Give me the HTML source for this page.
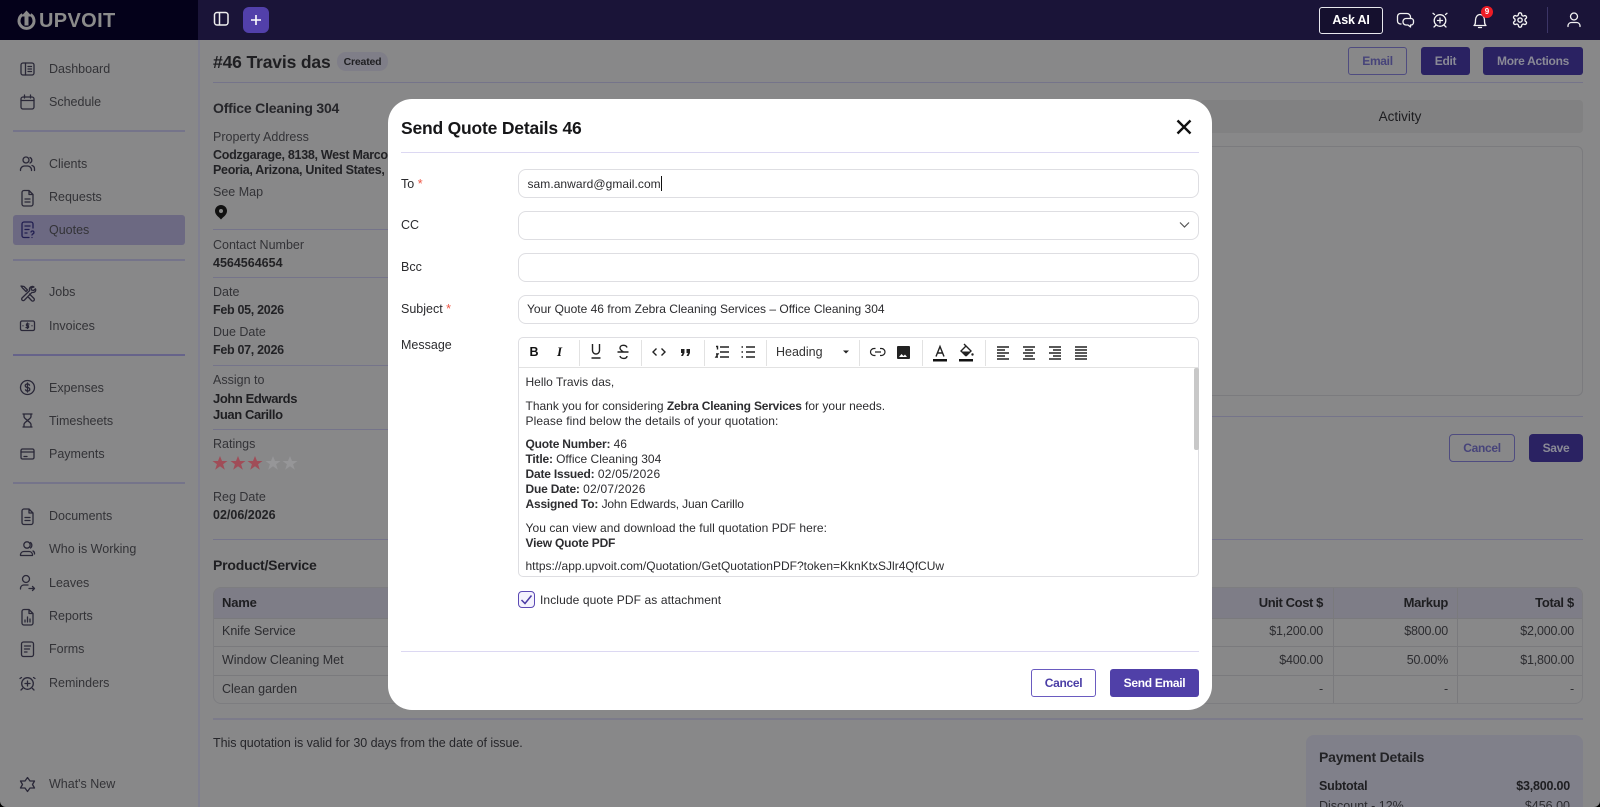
<!DOCTYPE html>
<html lang="en"><head><meta charset="utf-8"><title>Send Quote</title>
<style>
*{box-sizing:border-box}
html,body{margin:0;padding:0;width:1600px;height:807px;overflow:hidden;background:#000}
body{position:relative;font-family:"Liberation Sans",sans-serif;font-size:13px;color:#2c2c30}
#page{position:absolute;left:0;top:0;width:1600px;height:807px;background:#888889;overflow:hidden;border-radius:0 0 6px 6px}
.t{position:absolute;white-space:nowrap;line-height:16px}
.b{font-weight:bold;letter-spacing:-.2px}
.l{position:absolute;height:1px;background:#75748a}
.r{position:absolute}
.side{color:#333337;font-size:12.5px;left:49px}
.lab{color:#333337;font-size:12.5px;left:213px}
.val{color:#222225;font-size:12.5px;font-weight:bold;left:213px;letter-spacing:-.3px}
svg{position:absolute;left:0;top:0;overflow:visible}
.dim path,.dim circle,.dim rect{fill:none;stroke:#2a2838;stroke-width:1.3;stroke-linecap:round;stroke-linejoin:round}
.inp{position:absolute;left:130px;width:681px;height:29px;border:1px solid #dedee2;border-radius:8px;background:#fff}
.m{color:#2b2b2e;font-size:12.5px}
.e{color:#2d2d30;font-size:12px;left:137.5px}
.e b{letter-spacing:-.2px}
.d{letter-spacing:.25px}
.tb path,.tb rect,.tb circle{fill:none;stroke:#222;stroke-width:1.4}
.sep{position:absolute;top:2px;width:1px;height:26px;background:#e2e2e2}
.n{font-size:12.5px;letter-spacing:-.2px}
.btn{font-size:12px;letter-spacing:-.3px}
</style></head><body>
<div id="page">
<!-- top bar -->
<div class="r" style="left:0;top:0;width:198px;height:40px;background:#04011a"></div>
<div class="r" style="left:198px;top:0;width:1402px;height:40px;background:#1a1438"></div>
<div class="r" style="left:198px;top:40px;width:2px;height:767px;background:#80808f"></div>
<svg width="40" height="40"><path d="M22.500 14.500a7.500 7.500 0 1 0 8 0" fill="none" stroke="#8a8a8a" stroke-width="3"/><path d="M26.500 10.500l-5.500 6h3.500v9h4v-9h3.500z" fill="#8a8a8a"/></svg>
<div class="t b" style="left:39px;top:11px;font-size:20px;line-height:21px;color:#8b8b8b;letter-spacing:.35px">UPVOIT</div>
<svg><rect x="214.500" y="12.500" width="13.500" height="12.500" rx="2.500" fill="none" stroke="#eee" stroke-width="1.500"/><path d="M219.500 12.500v12.500" stroke="#eee" stroke-width="1.500"/></svg>
<div class="r" style="left:243px;top:7px;width:26px;height:26px;border-radius:6px;background:#5240aa"></div>
<svg><path d="M256 15v10M251 20h10" stroke="#fff" stroke-width="1.600"/></svg>
<div class="r" style="left:1319px;top:7px;width:64px;height:27px;border:1.500px solid #e8e8ee;border-radius:3px;background:#15102e"></div>
<div class="t b" style="left:1319px;width:64px;text-align:center;top:12px;color:#fff;font-size:12.500px">Ask AI</div>
<svg fill="none" stroke="#f2f2f2" stroke-width="1.300" stroke-linecap="round" stroke-linejoin="round">
<path d="M1401 24h-.5a3 3 0 0 1-3-3v-4.500a3 3 0 0 1 3-3h6.500a3.500 3.500 0 0 1 3.500 3.500v1.500"/><path d="M1403 21.500a3 3 0 0 1 3-3h5a2.500 2.500 0 0 1 2.500 2.500v1.500a2.500 2.500 0 0 1-2.500 2.500h-.500v2l-2.500-2h-2a3 3 0 0 1-3-3z"/>
<circle cx="1440" cy="20.500" r="5.800"/><path d="M1440 18v5M1437.500 20.500h5M1434.500 14.500l-1.500-1.200M1445.500 14.500l1.500-1.200M1435.500 25.500l-1.500 1.500M1444.500 25.500l1.500 1.500"/>
<path d="M1474 25.500c1.500-1 1.500-3 1.500-5.500 0-3 2-5.500 4.500-5.500s4.500 2.500 4.500 5.500c0 2.500 0 4.500 1.500 5.500zM1478.500 27.500h3"/>
<g transform="translate(1511.400 11.400) scale(.72)" stroke-width="1.900"><path d="M12.220 2h-.44a2 2 0 0 0-2 2v.18a2 2 0 0 1-1 1.730l-.43.25a2 2 0 0 1-2 0l-.15-.08a2 2 0 0 0-2.730.73l-.22.38a2 2 0 0 0 .73 2.730l.15.1a2 2 0 0 1 1 1.720v.51a2 2 0 0 1-1 1.740l-.15.09a2 2 0 0 0-.73 2.730l.22.38a2 2 0 0 0 2.730.73l.15-.08a2 2 0 0 1 2 0l.43.25a2 2 0 0 1 1 1.730V20a2 2 0 0 0 2 2h.44a2 2 0 0 0 2-2v-.18a2 2 0 0 1 1-1.730l.43-.25a2 2 0 0 1 2 0l.15.08a2 2 0 0 0 2.730-.73l.22-.39a2 2 0 0 0-.73-2.730l-.15-.08a2 2 0 0 1-1-1.740v-.5a2 2 0 0 1 1-1.740l.15-.09a2 2 0 0 0 .73-2.730l-.22-.38a2 2 0 0 0-2.730-.73l-.15.08a2 2 0 0 1-2 0l-.43-.25a2 2 0 0 1-1-1.730V4a2 2 0 0 0-2-2z"/><circle cx="12" cy="12" r="3"/></g>
<circle cx="1574" cy="16.500" r="3.500"/><path d="M1568 26.500v-1a3.500 3.500 0 0 1 3.500-3h5a3.500 3.500 0 0 1 3.500 3v1"/>
</svg>
<div class="r" style="left:1481px;top:6px;width:12px;height:12px;border-radius:50%;background:#ee1c25;color:#fff;font-size:8px;font-weight:bold;line-height:12px;text-align:center">9</div>
<div class="r" style="left:1546.500px;top:7px;width:1px;height:26px;background:#3c3566"></div>

<!-- sidebar -->
<div class="r" style="left:13px;top:215px;width:172px;height:30px;border-radius:3px;background:#6c6982"></div>
<div class="l" style="left:13px;top:130px;width:172px;height:1.500px"></div>
<div class="l" style="left:13px;top:259px;width:172px;height:1.500px"></div>
<div class="l" style="left:13px;top:354px;width:172px;height:1.500px;background:#66638a"></div>
<div class="l" style="left:13px;top:482px;width:172px;height:1.500px"></div>
<div class="t side" style="top:61px">Dashboard</div>
<div class="t side" style="top:94px">Schedule</div>
<div class="t side" style="top:156px">Clients</div>
<div class="t side" style="top:189px">Requests</div>
<div class="t side" style="top:222px">Quotes</div>
<div class="t side" style="top:284px">Jobs</div>
<div class="t side" style="top:318px">Invoices</div>
<div class="t side" style="top:380px">Expenses</div>
<div class="t side" style="top:413px">Timesheets</div>
<div class="t side" style="top:446px">Payments</div>
<div class="t side" style="top:508px">Documents</div>
<div class="t side" style="top:541px">Who is Working</div>
<div class="t side" style="top:575px">Leaves</div>
<div class="t side" style="top:608px">Reports</div>
<div class="t side" style="top:641px">Forms</div>
<div class="t side" style="top:675px">Reminders</div>
<div class="t side" style="top:776px">What's New</div>
<svg class="dim">
<rect x="21" y="63" width="13" height="12" rx="2"/><path d="M25.500 63v12M28 66.500h3.500M28 69h3.500M28 71.500h3.500"/>
<rect x="21" y="97" width="13" height="12" rx="2"/><path d="M21 100.500h13M24.500 95v3M30.500 95v3"/>
<circle cx="26" cy="160" r="3"/><path d="M20.500 170.500v-1a4 4 0 0 1 4-3.500h3a4 4 0 0 1 4 3.500v1M30 157.500a3 3 0 0 1 0 5.500M32 165.500a3.500 3.500 0 0 1 2.500 3.500v1.500"/>
<path d="M24 190.500h5l4 4v9.500a2 2 0 0 1-2 2h-7a2 2 0 0 1-2-2v-11.500a2 2 0 0 1 2-2zM29 190.500v4h4M25 199h5M25 202h5"/>
<path d="M33 228v-4a2 2 0 0 0-2-2h-7a2 2 0 0 0-2 2v11.500a2 2 0 0 0 2 2h5M25 226h5M25 229.500h4M25 233h2M31 232a1.500 1.500 0 1 1 1.500 2l-.5 1M32 237.500v0" style="stroke:#211e50"/>
<path d="M21 286l3 .5 3.500 3.500-1.500 1.500-3.500-3.500zM34 287a3 3 0 0 0-4 .5 3 3 0 0 0-.3 3l-7.700 7.500a1.500 1.500 0 0 0 2.500 2l7.500-7.700a3 3 0 0 0 3-.5 3 3 0 0 0 .5-3l-2 1.700-2-.5-.5-2zM29.500 294l4.500 4.500a1.500 1.500 0 0 1-2.500 2l-3.700-4"/>
<rect x="20.500" y="321" width="14" height="9.500" rx="1.500"/><path d="M27.500 323v5.500M29 324h-2.500v1.800h2v1.800h-2.500M23 325.800h0M32 325.800h0"/>
<circle cx="27.500" cy="387.500" r="7"/><path d="M29.500 385.200a2 2 0 0 0-2-1.200c-3 0-3 3.300 0 3.500s3 3.500 0 3.500a2 2 0 0 1-2-1.200M27.500 383v9"/>
<path d="M23 414h9M23 427h9M24 414v2.500c0 2 3.500 3.500 3.500 4s-3.500 2-3.500 4v2.500M31 414v2.500c0 2-3.500 3.500-3.500 4s3.500 2 3.500 4v2.500"/>
<rect x="21" y="449" width="13" height="10" rx="1.500"/><path d="M21 452h13M24 456.500h3"/>
<path d="M24 509h5l4 4v9.500a2 2 0 0 1-2 2h-7a2 2 0 0 1-2-2v-11.500a2 2 0 0 1 2-2zM29 509v4h4M25 517.500h5M25 520.500h5"/>
<circle cx="27" cy="545" r="3.200"/><path d="M20.500 555.500v-1a3.500 3.500 0 0 1 3.500-3h5a3.500 3.500 0 0 1 3.500 3v1zM30.500 542.500a3.500 3.500 0 0 1 0 5.500M33 551a3 3 0 0 1 1.500 3"/>
<circle cx="26" cy="579" r="3.500"/><path d="M20.500 589v-1a3.500 3.500 0 0 1 3.500-3h4M29 588.500h5.500M32.500 586.500l2 2-2 2"/>
<path d="M24 609.500h5l4 4v9.500a2 2 0 0 1-2 2h-7a2 2 0 0 1-2-2v-11.500a2 2 0 0 1 2-2zM29 609.500v4h4M25 622v-2M27.500 622v-5M30 622v-3"/>
<rect x="21.500" y="642" width="12" height="14.500" rx="2"/><path d="M24.500 646h6M24.500 649h5M24.500 652h2.500"/>
<circle cx="27.500" cy="683.500" r="5.800"/><path d="M27.500 681v5M25 683.500h5M21.500 677.500l-1.500 1M33.500 677.500l1.500 1M22.500 688.500l-1.500 1.500M32.500 688.500l1.500 1.500"/>
<path d="M27.500 777.500l2.500 3.500h4.500l-2 3.500 2 3.500h-4.500l-2.500 3.500-2.500-3.500h-4.500l2-3.500-2-3.500h4.500z"/>
</svg>

<!-- main content -->
<div class="t b" style="left:213px;top:53px;font-size:17.500px;line-height:18px;color:#1f1f22;letter-spacing:-.15px">#46 Travis das</div>
<div class="r" style="left:337px;top:52px;width:51px;height:19px;border-radius:9px;background:#7f7e88"></div>
<div class="t b" style="left:337px;width:51px;text-align:center;top:54px;font-size:10.500px;color:#202023">Created</div>
<div class="l" style="left:213px;top:82px;width:1370px"></div>
<div class="t b" style="left:213px;top:100px;font-size:14px;color:#26262a">Office Cleaning 304</div>
<div class="t lab" style="top:129px">Property Address</div>
<div class="t val" style="top:147px">Codzgarage, 8138, West Marco</div>
<div class="t val" style="top:162px">Peoria, Arizona, United States, 85381</div>
<div class="t lab" style="top:184px">See Map</div>
<svg><path d="M221 205a6 6 0 0 1 6 6c0 4-4 6-6 8.500-2-2.500-6-4.500-6-8.500a6 6 0 0 1 6-6z" fill="#111"/><circle cx="221" cy="211" r="2" fill="#888"/></svg>
<div class="l" style="left:213px;top:229px;width:180px"></div>
<div class="t lab" style="top:237px">Contact Number</div>
<div class="t val" style="top:255px;letter-spacing:0">4564564654</div>
<div class="l" style="left:213px;top:277px;width:180px"></div>
<div class="t lab" style="top:284px">Date</div>
<div class="t val" style="top:302px">Feb 05, 2026</div>
<div class="t lab" style="top:324px">Due Date</div>
<div class="t val" style="top:342px">Feb 07, 2026</div>
<div class="l" style="left:213px;top:365px;width:180px"></div>
<div class="t lab" style="top:372px">Assign to</div>
<div class="t val" style="top:391px;font-size:13px;color:#1e1e21;letter-spacing:-.4px">John Edwards</div>
<div class="t val" style="top:407px;font-size:13px;color:#1e1e21;letter-spacing:-.4px">Juan Carillo</div>
<div class="l" style="left:213px;top:429px;width:180px"></div>
<div class="t lab" style="top:436px">Ratings</div>
<svg><g fill="#a04d58"><path d="M220 456l2 5h5.500l-4.400 3.200 1.700 5.500-4.800-3.400-4.800 3.400 1.700-5.500-4.400-3.200h5.500z"/><path d="M220 456l2 5h5.500l-4.400 3.200 1.700 5.500-4.800-3.400-4.800 3.400 1.700-5.500-4.400-3.200h5.500z" transform="translate(18 0)"/><path d="M220 456l2 5h5.500l-4.400 3.200 1.700 5.500-4.800-3.400-4.800 3.400 1.700-5.500-4.400-3.200h5.500z" transform="translate(35 0)"/></g><g fill="#969698"><path d="M220 456l2 5h5.500l-4.400 3.200 1.700 5.500-4.800-3.400-4.800 3.400 1.700-5.500-4.400-3.200h5.500z" transform="translate(53 0)"/><path d="M220 456l2 5h5.500l-4.400 3.200 1.700 5.500-4.800-3.400-4.800 3.400 1.700-5.500-4.400-3.200h5.500z" transform="translate(70 0)"/></g></svg>
<div class="t lab" style="top:489px">Reg Date</div>
<div class="t val" style="top:507px;letter-spacing:0">02/06/2026</div>
<div class="l" style="left:213px;top:539px;width:1370px"></div>
<div class="t b" style="left:213px;top:557px;font-size:14px;color:#1f1f22">Product/Service</div>
<!-- table -->
<div class="r" style="left:213px;top:587px;width:1370px;height:117px;border:1px solid #7d7d80;border-radius:8px;overflow:hidden">
 <div class="r" style="left:0;top:0;width:100%;height:30px;background:#7e7d87"></div>
 <div class="r" style="left:0;top:29.500px;width:100%;height:1px;background:#7a7a7d"></div>
 <div class="r" style="left:0;top:58px;width:100%;height:1px;background:#7a7a7d"></div>
 <div class="r" style="left:0;top:87px;width:100%;height:1px;background:#7a7a7d"></div>
 <div class="r" style="left:1119px;top:0;width:1px;height:100%;background:#7a7a7d"></div>
 <div class="r" style="left:1243px;top:0;width:1px;height:100%;background:#7a7a7d"></div>
</div>
<div class="t b" style="left:222px;top:594.500px;font-size:13px;color:#1e1e21">Name</div>
<div class="t" style="left:222px;top:623px;font-size:12.500px">Knife Service</div>
<div class="t" style="left:222px;top:652px;font-size:12.500px">Window Cleaning Met</div>
<div class="t" style="left:222px;top:681px;font-size:12.500px">Clean garden</div>
<div class="t b" style="right:277px;top:594.500px;color:#1e1e21;letter-spacing:-.4px">Unit Cost $</div>
<div class="t b" style="right:152px;top:594.500px;color:#1e1e21;letter-spacing:-.3px">Markup</div>
<div class="t b" style="right:26px;top:594.500px;color:#1e1e21;letter-spacing:-.3px">Total $</div>
<div class="t n" style="right:277px;top:623px">$1,200.00</div>
<div class="t n" style="right:152px;top:623px">$800.00</div>
<div class="t n" style="right:26px;top:623px">$2,000.00</div>
<div class="t n" style="right:277px;top:652px">$400.00</div>
<div class="t n" style="right:152px;top:652px">50.00%</div>
<div class="t n" style="right:26px;top:652px">$1,800.00</div>
<div class="t n" style="right:277px;top:681px">-</div>
<div class="t n" style="right:152px;top:681px">-</div>
<div class="t n" style="right:26px;top:681px">-</div>
<div class="l" style="left:213px;top:718px;width:1370px;height:1.500px;background:#7c7b8a"></div>
<div class="t" style="left:213px;top:735px;font-size:12.500px;color:#26262a;letter-spacing:-.05px">This quotation is valid for 30 days from the date of issue.</div>
<div class="r" style="left:1306px;top:735px;width:277px;height:90px;border-radius:8px;background:#80808a"></div>
<div class="t b" style="left:1319px;top:749px;font-size:14px;color:#232326">Payment Details</div>
<div class="t b" style="left:1319px;top:778px;font-size:12.500px;color:#1e1e21">Subtotal</div>
<div class="t b" style="right:30px;top:778px;font-size:12.500px;color:#1e1e21">$3,800.00</div>
<div class="t" style="left:1319px;top:798px;font-size:12.500px">Discount - 12%</div>
<div class="t" style="right:30px;top:798px;font-size:12.500px">$456.00</div>
<!-- right top buttons -->
<div class="r" style="left:1348px;top:47px;width:59px;height:28px;border:1px solid #4f4c80;border-radius:3px"></div>
<div class="t b btn" style="left:1348px;width:59px;text-align:center;top:53px;color:#47447a">Email</div>
<div class="r" style="left:1421px;top:47px;width:49px;height:28px;border-radius:3px;background:#2a2262"></div>
<div class="t b btn" style="left:1421px;width:49px;text-align:center;top:53px;color:#8a8a96">Edit</div>
<div class="r" style="left:1483px;top:47px;width:100px;height:28px;border-radius:3px;background:#2a2262"></div>
<div class="t b btn" style="left:1483px;width:100px;text-align:center;top:53px;color:#8a8a96">More Actions</div>
<div class="r" style="left:1200px;top:100px;width:383px;height:33px;border-radius:4px;background:#818182"></div>
<div class="t" style="left:1200px;width:400px;text-align:center;top:109px;font-size:13.500px;color:#1d1d20">Activity</div>
<div class="r" style="left:1200px;top:146px;width:383px;height:250px;border:1px solid #7b7b7e;border-radius:6px"></div>
<div class="l" style="left:1200px;top:416px;width:383px"></div>
<div class="r" style="left:1449px;top:434px;width:66px;height:28px;border:1px solid #4f4c80;border-radius:4px"></div>
<div class="t b btn" style="left:1449px;width:66px;text-align:center;top:440px;color:#47447a">Cancel</div>
<div class="r" style="left:1529px;top:434px;width:54px;height:28px;border-radius:4px;background:#2a2262"></div>
<div class="t b btn" style="left:1529px;width:54px;text-align:center;top:440px;color:#8a8a96">Save</div>

<!-- modal -->
<div class="r" style="left:388px;top:98.500px;width:824px;height:611.500px;background:#fff;border-radius:24px">
 <div class="t b" style="left:13px;top:20.500px;font-size:17.500px;line-height:19px;color:#161618;letter-spacing:-.2px">Send Quote Details 46</div>
 <svg><path d="M789.500 21.500l13 13M802.500 21.500l-13 13" stroke="#111" stroke-width="2.400" fill="none"/></svg>
 <div class="r" style="left:13px;top:53.500px;width:798px;height:1px;background:#dcd8f2"></div>
 <div class="t m" style="left:13px;top:77px">To <span style="color:#e54">*</span></div>
 <div class="t m" style="left:13px;top:118px">CC</div>
 <div class="t m" style="left:13px;top:160px">Bcc</div>
 <div class="t m" style="left:13px;top:202px">Subject <span style="color:#e54">*</span></div>
 <div class="t m" style="left:13px;top:238px">Message</div>
 <div class="inp" style="top:70.500px"></div>
 <div class="t" style="left:139.500px;top:77px;font-size:12px;color:#2b2b2e;letter-spacing:.05px">sam.anward@gmail.com<span style="display:inline-block;width:1px;height:15px;background:#111;vertical-align:-3px"></span></div>
 <div class="inp" style="top:112.500px"></div>
 <svg><path d="M792 123.500l4.500 4.500 4.500-4.500" stroke="#555" stroke-width="1.200" fill="none"/></svg>
 <div class="inp" style="top:154.500px"></div>
 <div class="inp" style="top:196.500px"></div>
 <div class="t" style="left:139px;top:202px;font-size:12px;color:#2b2b2e">Your Quote 46 from Zebra Cleaning Services – Office Cleaning 304</div>
 <!-- editor -->
 <div class="r" style="left:130px;top:238.500px;width:681px;height:240px;border:1px solid #dedee2;border-radius:5px">
  <div class="r" style="left:0;top:29px;width:100%;height:1px;background:#e2e2e2"></div>
  <div class="sep" style="left:60px"></div><div class="sep" style="left:122px"></div><div class="sep" style="left:185px"></div><div class="sep" style="left:247px"></div><div class="sep" style="left:340px"></div><div class="sep" style="left:403px"></div><div class="sep" style="left:466px"></div>
  <div class="r" style="left:675px;top:30px;width:5px;height:82px;background:#c8c8c8;border-radius:2px"></div>
 </div>
 <div class="t b" style="left:141.500px;top:245px;font-size:12.500px;color:#111">B</div>
 <div class="t b" style="left:169px;top:245px;font-size:13px;color:#111;font-style:italic;font-family:'Liberation Serif',serif">I</div>
 <div class="t" style="left:388px;top:245.500px;font-size:12.500px;color:#333">Heading</div>
 <svg class="tb" style="left:-388px;top:-98.500px"><g transform="translate(0 3)">
  <path d="M592.500 341v6.500a3.500 3.500 0 0 0 7 0V341M591.500 355h9"/>
  <path d="M617.500 349h11M627 344.500c-1-3-7-3-7 .5 0 2 2 3 3.500 4M620 353c.5 3 7 3.500 7 0"/>
  <path d="M656.500 345.500l-3.500 3.500 3.500 3.500M661.500 345.500l3.500 3.500-3.500 3.500"/>
  <path d="M681 353l1.500-3h-1.500v-4h3.500v4l-1.500 3zM686.500 353l1.500-3h-1.500v-4h3.500v4l-1.500 3z" style="fill:#222;stroke:none"/>
  <path d="M720 344h9M720 349h9M720 354h9M716 343.500h1.500v3M716 351h2l-2 3h2"/>
  <path d="M746 344h9M746 349h9M746 354h9M741.500 344h1.500M741.500 349h1.500M741.500 354h1.500"/>
  <path d="M843 347.500h6l-3 3z" style="fill:#222;stroke:none"/>
  <path d="M875.500 345.500h-1.500a3.500 3.500 0 0 0 0 7h1.500M880 345.500h1.500a3.500 3.500 0 0 1 0 7H880M875 349h6" style="stroke-width:1.200"/>
  <rect x="897" y="343" width="13" height="13" rx="1" style="fill:#222;stroke:none"/><path d="M899 354l2.500-3 2 2 1.500-1.500 2 2.500z" style="fill:#fff;stroke:none"/>
  <rect x="933" y="356" width="14" height="2.500" style="fill:#111;stroke:none"/><path d="M936 353.500l4-10 4 10M937.500 350h5"/>
  <rect x="959" y="356" width="14" height="2.500" style="fill:#111;stroke:none"/><path d="M961 348l5-5 5 5-4.500 4.500a1 1 0 0 1-1 0zM964 341l2 2"/><path d="M961.500 348.500h9l-4.500 4.500z" style="fill:#222;stroke:none"/><circle cx="972.500" cy="351.500" r="1.200" style="fill:#222;stroke:none"/>
  <path d="M997 344h12M997 347h8M997 350h12M997 353h8M997 356h12"/>
  <path d="M1023 344h12M1025 347h8M1023 350h12M1025 353h8M1023 356h12"/>
  <path d="M1049 344h12M1053 347h8M1049 350h12M1053 353h8M1049 356h12"/>
  <path d="M1075 344h12M1075 347h12M1075 350h12M1075 353h12M1075 356h12"/>
 </g></svg>
 <div class="t e" style="top:275.500px">Hello Travis das,</div>
 <div class="t e" style="top:299px">Thank you for considering <b>Zebra Cleaning Services</b> for your needs.</div>
 <div class="t e" style="top:314px;letter-spacing:.1px">Please find below the details of your quotation:</div>
 <div class="t e" style="top:337.500px"><b>Quote Number:</b> 46</div>
 <div class="t e" style="top:352.500px"><b>Title:</b> Office Cleaning 304</div>
 <div class="t e" style="top:367.500px"><b>Date Issued:</b> <span class="d">02/05/2026</span></div>
 <div class="t e" style="top:382.500px"><b>Due Date:</b> <span class="d">02/07/2026</span></div>
 <div class="t e" style="top:397.500px"><b>Assigned To:</b> <span style="letter-spacing:-.15px">John Edwards, Juan Carillo</span></div>
 <div class="t e" style="top:421px;letter-spacing:.07px">You can view and download the full quotation PDF here:</div>
 <div class="t e" style="top:436.500px"><b>View Quote PDF</b></div>
 <div class="t e" style="top:459px">https://app.upvoit.com/Quotation/GetQuotationPDF?token=KknKtxSJlr4QfCUw</div>
 <div class="r" style="left:130px;top:492px;width:17px;height:17px;border:1.300px solid #5b49b4;border-radius:4px;background:#f4f2fd"></div>
 <svg><path d="M133.500 501l3.500 3.500 6.500-8" stroke="#4a3aa4" stroke-width="1.500" fill="none"/></svg>
 <div class="t" style="left:152px;top:493px;font-size:12px;color:#2b2b2e;letter-spacing:.1px">Include quote PDF as attachment</div>
 <div class="r" style="left:13px;top:552.500px;width:798px;height:1px;background:#dcd8f2"></div>
 <div class="r" style="left:643px;top:570px;width:65px;height:28.500px;border:1px solid #6a5bc0;border-radius:3px;background:#fff"></div>
 <div class="t b btn" style="left:643px;width:65px;text-align:center;top:576px;color:#4b3ea6">Cancel</div>
 <div class="r" style="left:722px;top:570px;width:89px;height:28.500px;border-radius:3px;background:#5040a8"></div>
 <div class="t b btn" style="left:722px;width:89px;text-align:center;top:576px;color:#fff">Send Email</div>
</div>
</div>
</body></html>
